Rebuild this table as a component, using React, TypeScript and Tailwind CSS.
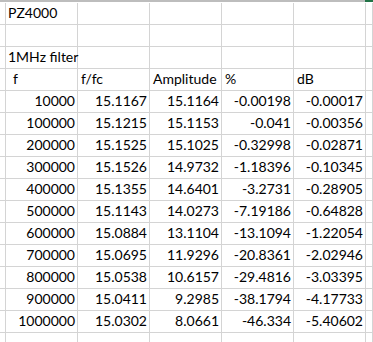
import React from "react";

const rows: string[][] = [
  ["10000", "15.1167", "15.1164", "-0.00198", "-0.00017"],
  ["100000", "15.1215", "15.1153", "-0.041", "-0.00356"],
  ["200000", "15.1525", "15.1025", "-0.32998", "-0.02871"],
  ["300000", "15.1526", "14.9732", "-1.18396", "-0.10345"],
  ["400000", "15.1355", "14.6401", "-3.2731", "-0.28905"],
  ["500000", "15.1143", "14.0273", "-7.19186", "-0.64828"],
  ["600000", "15.0884", "13.1104", "-13.1094", "-1.22054"],
  ["700000", "15.0695", "11.9296", "-20.8361", "-2.02946"],
  ["800000", "15.0538", "10.6157", "-29.4816", "-3.03395"],
  ["900000", "15.0411", "9.2985", "-38.1794", "-4.17733"],
  ["1000000", "15.0302", "8.0661", "-46.334", "-5.40602"],
];

const cell = "h-[22px] border-r border-b border-[#d4d4d4] leading-[20px] whitespace-nowrap";

const Row = ({ children }: { children?: React.ReactNode }) => (
  <div className="grid grid-cols-[6px_repeat(5,72px)_1fr]">{children}</div>
);

const Blank = ({ n }: { n: number }) => (
  <>
    {Array.from({ length: n }).map((_, i) => (
      <div key={i} className={cell}></div>
    ))}
  </>
);

export default function App() {
  return (
    <div
      className="w-[373px] h-[342px] overflow-hidden bg-white text-[14px] text-black"
      style={{ fontFamily: "Lato, 'Liberation Sans', sans-serif" }}
    >
      {/* column header edge */}
      <div className="flex h-[3px]">
        <div className="h-[2px] flex-1 bg-[#bdbdbd]"></div>
        <div className="h-[2px] w-[8px] bg-[#217346]"></div>
      </div>

      <Row>
        <div className={cell}></div>
        <div className={`${cell} pl-[2px] overflow-visible relative z-10`}>PZ4000</div>
        <Blank n={5} />
      </Row>
      <Row>
        <Blank n={7} />
      </Row>
      <Row>
        <div className={cell}></div>
        <div className={`${cell} pl-[2px] overflow-visible relative z-10`}>1MHz filter</div>
        <Blank n={5} />
      </Row>
      <Row>
        <div className={cell}></div>
        <div className={`${cell} pl-[7px] overflow-hidden`}>f</div>
        <div className={`${cell} pl-[3px] overflow-hidden`}>f/fc</div>
        <div className={`${cell} pl-[3px] overflow-hidden`}>Amplitude</div>
        <div className={`${cell} pl-[3px] overflow-hidden`}>%</div>
        <div className={`${cell} pl-[3px] overflow-hidden`}>dB</div>
        <div className={cell}></div>
      </Row>
      {rows.map((r) => (
        <Row key={r[0]}>
          <div className={cell}></div>
          {r.map((v, i) => (
            <div key={i} className={`${cell} pr-[2px] text-right`}>
              {v}
            </div>
          ))}
          <div className={cell}></div>
        </Row>
      ))}
      <Row>
        <Blank n={7} />
      </Row>
    </div>
  );
}
